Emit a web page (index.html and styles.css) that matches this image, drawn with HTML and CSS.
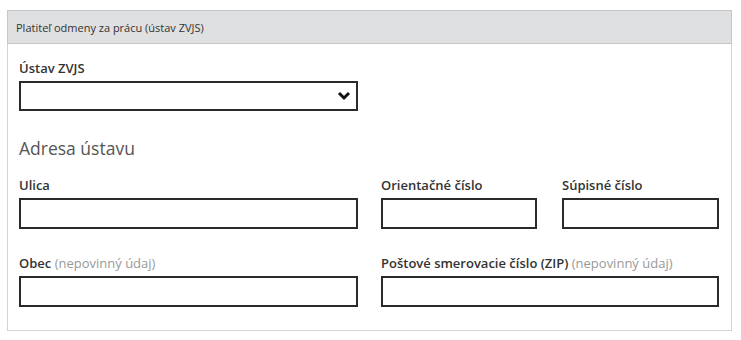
FILE: index.html
```html
<!DOCTYPE html>
<html lang="sk">
<head>
  <meta charset="UTF-8">
  <meta name="viewport" content="width=device-width, initial-scale=1.0">
  <title>Platiteľ odmeny</title>
  <link rel="stylesheet" href="styles.css">
</head>
<body>
  <div class="panel">
    <div class="panel-head">Platiteľ odmeny za prácu (ústav ZVJS)</div>
    <div class="panel-body">
      <div class="row">
        <div class="field">
          <label>Ústav ZVJS</label>
          <div class="select">
            <svg width="14" height="10" viewBox="0 0 14 10"><path d="M2 2 L7 7 L12 2" fill="none" stroke="#111" stroke-width="3"/></svg>
          </div>
        </div>
      </div>
      <h2 class="section">Adresa ústavu</h2>
      <div class="row">
        <div class="field">
          <label>Ulica</label>
          <input type="text">
        </div>
        <div class="row-half">
          <div class="field">
            <label>Orientačné číslo</label>
            <input type="text">
          </div>
          <div class="field">
            <label>Súpisné číslo</label>
            <input type="text">
          </div>
        </div>
      </div>
      <div class="row gap-top">
        <div class="field">
          <label>Obec <span class="opt">(nepovinný údaj)</span></label>
          <input type="text">
        </div>
        <div class="field">
          <label>Poštové smerovacie číslo (ZIP) <span class="opt">(nepovinný údaj)</span></label>
          <input type="text">
        </div>
      </div>
    </div>
  </div>
</body>
</html>
```

FILE: styles.css
```css
body {
  margin: 0;
  padding: 10px 9px 0 7px;
  font-family: "Open Sans", "DejaVu Sans", sans-serif;
  color: #333;
  background: #fff;
}
.panel {
  border: 1px solid #d4d4d4;
  width: 723px;
  height: 319px;
}
.panel-head {
  background: #dfe0e1;
  border: 1px solid #c6c7c8;
  margin: -1px -1px 0 -1px;
  height: 32px;
  line-height: 33px;
  padding-left: 8px;
  font-size: 11px;
  color: #333;
}
.panel-body {
  padding: 16px 13px 0 11px;
}
.row {
  display: grid;
  grid-template-columns: 339px 338px;
  column-gap: 23px;
}
.row-half {
  display: grid;
  grid-template-columns: 156px 157px;
  column-gap: 25px;
}
.gap-top {
  margin-top: 26px;
}
.field {
  display: flex;
  flex-direction: column;
}
label {
  font-size: 13px;
  font-weight: 600;
  line-height: 16px;
  color: #333;
  margin-bottom: 5px;
  white-space: nowrap;
}
.opt {
  font-weight: 400;
  color: #999;
}
input,
.select {
  box-sizing: border-box;
  height: 31px;
  border: 2px solid #2a2a2a;
  background: #fff;
  margin: 0;
}
.select {
  height: 30px;
  display: flex;
  justify-content: flex-end;
  align-items: center;
  padding-right: 5px;
}
.section {
  font-size: 17.5px;
  font-weight: 400;
  line-height: 22px;
  color: #555;
  margin: 26px 0 18px 0;
}
```
